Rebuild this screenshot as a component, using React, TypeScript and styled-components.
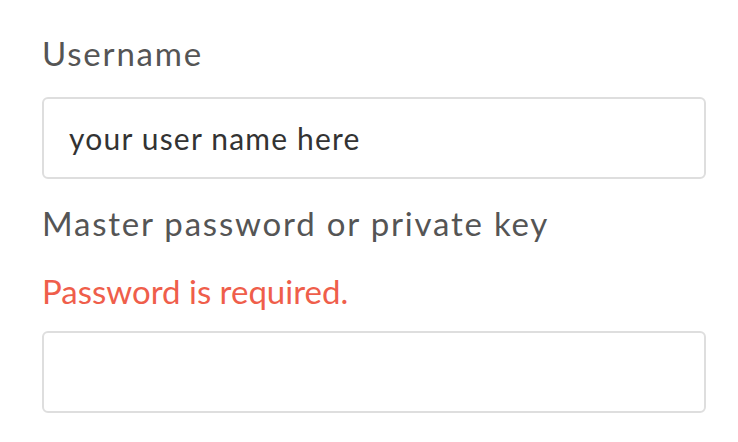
import React from "react";
import styled, { createGlobalStyle } from "styled-components";

const Global = createGlobalStyle`
  html, body { margin: 0; padding: 0; background: #ffffff; }
  body { font-family: Lato, "Open Sans", sans-serif; }
`;

const Form = styled.form`
  display: flex;
  flex-direction: column;
  width: 664px;
  padding: 33px 0 0 42px;
`;

const Label = styled.label<{ $mt?: number }>`
  display: block;
  font-size: 33px;
  line-height: 40px;
  letter-spacing: 1.8px;
  color: #555555;
  margin-top: ${(p) => p.$mt ?? 0}px;
`;

const ErrorText = styled.div`
  font-size: 33px;
  line-height: 40px;
  letter-spacing: 0;
  color: #ef5e4b;
  margin-top: 28px;
`;

const Input = styled.input<{ $mt: number }>`
  box-sizing: border-box;
  width: 664px;
  height: 82px;
  margin: ${(p) => p.$mt}px 0 0 0;
  padding: 0 25px;
  border: 2px solid #dedede;
  border-radius: 6px;
  font-family: Lato, "Open Sans", sans-serif;
  font-size: 30px;
  letter-spacing: 1.2px;
  color: #333333;
  background: #ffffff;
  outline: none;
`;

export default function App() {
  return (
    <>
      <Global />
      <Form onSubmit={(e) => e.preventDefault()}>
        <Label htmlFor="username">Username</Label>
        <Input id="username" $mt={24} defaultValue="your user name here" />
        <Label htmlFor="password" $mt={24}>
          Master password or private key
        </Label>
        <ErrorText>Password is required.</ErrorText>
        <Input id="password" type="password" $mt={20} />
      </Form>
    </>
  );
}
